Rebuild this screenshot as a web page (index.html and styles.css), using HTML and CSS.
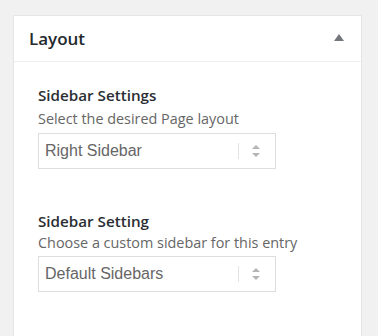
FILE: index.html
```html
<!DOCTYPE html>
<html lang="en">
<head>
  <meta charset="UTF-8">
  <title>Layout</title>
  <link rel="stylesheet" href="styles.css">
</head>
<body>
  <div class="postbox">
    <div class="postbox-header">
      <h2>Layout</h2>
      <span class="toggle"></span>
    </div>
    <div class="inside">
      <div class="field">
        <label class="field-label">Sidebar Settings</label>
        <p class="field-desc">Select the desired Page layout</p>
        <div class="select">
          <span class="select-value">Right Sidebar</span>
          <span class="select-sep"></span>
          <span class="select-arrows"></span>
        </div>
      </div>
      <div class="field">
        <label class="field-label">Sidebar Setting</label>
        <p class="field-desc">Choose a custom sidebar for this entry</p>
        <div class="select">
          <span class="select-value">Default Sidebars</span>
          <span class="select-sep"></span>
          <span class="select-arrows"></span>
        </div>
      </div>
    </div>
  </div>
</body>
</html>
```
FILE: styles.css
```css
* { box-sizing: border-box; }
html, body {
  height: 336px;
  overflow: hidden;
}
body {
  margin: 0;
  padding: 15px 16px 0 13px;
  background: #f1f1f1;
  font-family: 'Open Sans', sans-serif;
}
.postbox {
  background: #fff;
  border: 1px solid #e5e5e5;
  min-height: 330px;
}
.postbox-header {
  display: flex;
  align-items: center;
  justify-content: space-between;
  height: 46px;
  padding: 0 17px 0 15px;
  border-bottom: 1px solid #eee;
}
.postbox-header h2 {
  margin: 0;
  font-size: 17px;
  font-weight: 600;
  color: #23282d;
}
.toggle {
  width: 0;
  height: 0;
  border-left: 5px solid transparent;
  border-right: 5px solid transparent;
  border-bottom: 7px solid #72777c;
  margin-top: -2px;
}
.inside {
  padding: 22px 0 0 24px;
}
.field {
  margin-bottom: 41px;
}
.field + .field .field-label {
  margin-bottom: 0;
}
.field + .field .field-desc {
  margin-bottom: 3px;
}
.field-label {
  display: block;
  margin-bottom: 2px;
  font-size: 15.2px;
  font-weight: 600;
  color: #2a2e33;
  line-height: 22px;
}
.field-desc {
  margin: 0 0 4px;
  font-size: 14.4px;
  color: #666;
  line-height: 21px;
}
.select {
  display: flex;
  align-items: center;
  width: 238px;
  height: 36px;
  border: 1px solid #ddd;
  padding: 0 0 0 6px;
  font-family: 'Liberation Sans', Arial, sans-serif;
  font-size: 16px;
  color: #666;
}
.select-value {
  flex: 1;
}
.select-sep {
  width: 1px;
  height: 16px;
  background: #e3e3e3;
}
.select-arrows {
  position: relative;
  width: 36px;
  height: 12px;
}
.select-arrows::before,
.select-arrows::after {
  content: "";
  position: absolute;
  left: 13px;
  border-left: 4px solid transparent;
  border-right: 4px solid transparent;
}
.select-arrows::before {
  top: 0;
  border-bottom: 4px solid #b4b4b4;
}
.select-arrows::after {
  bottom: 0;
  border-top: 4px solid #b4b4b4;
}
```
